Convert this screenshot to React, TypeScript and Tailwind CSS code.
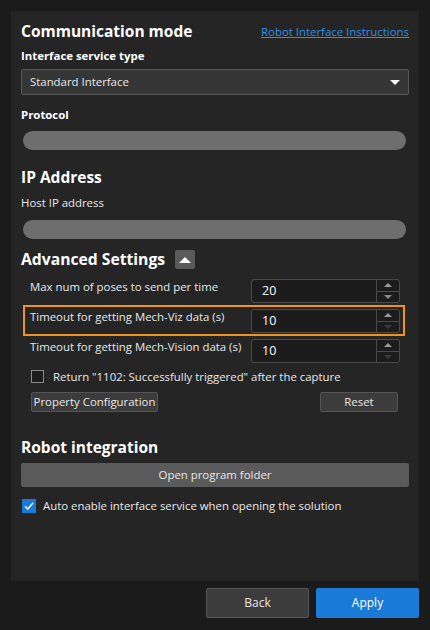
import React from 'react';

const font = { fontFamily: '"Open Sans", "Noto Sans", sans-serif' };

function Spin({ value, downDim }: { value: string; downDim?: boolean }) {
  return (
    <div className="flex h-[24px] w-[149px] rounded-[3px] border border-[#4a4a4a] bg-[#1c1c1c]">
      <div className="flex flex-1 items-center pl-[10px] text-[12.5px] text-white">{value}</div>
      <div className="flex w-[23px] flex-col border-l border-[#4a4a4a]">
        <div className="flex flex-1 items-center justify-center border-b border-[#4a4a4a]">
          <span className="h-0 w-0 border-x-[4px] border-b-[4px] border-x-transparent border-b-[#9a9a9a]" />
        </div>
        <div className="flex flex-1 items-center justify-center">
          <span
            className={
              downDim
                ? 'h-0 w-0 border-x-[4px] border-t-[4px] border-x-transparent border-t-[#3c3c3c]'
                : 'h-0 w-0 border-x-[4px] border-t-[4px] border-x-transparent border-t-[#8a8a8a]'
            }
          />
        </div>
      </div>
    </div>
  );
}

function Row({ label, value, downDim, active }: { label: string; value: string; downDim?: boolean; active?: boolean }) {
  return (
    <div className="relative ml-[12px] flex h-[30px] w-[382px] items-start justify-between pl-[7px] pr-[5px]">
      {active && <div className="absolute -top-px bottom-0 left-0 right-0 border-2 border-[#f0951c]" />}
      <div className="mt-[1px] whitespace-nowrap text-[11.4px] leading-[20px] text-[#e8e8e8]">{label}</div>
      <div className="mt-[3px]">
        <Spin value={value} downDim={downDim} />
      </div>
    </div>
  );
}

export default function App() {
  return (
    <div className="flex h-[630px] w-[430px] flex-col bg-[#1b1b1b]" style={font}>
      <div className="ml-[11px] mt-[11px] flex h-[570px] w-[408px] flex-col bg-[#252525] pl-[10px] pr-[10px]">
        {/* Communication mode */}
        <div className="mt-[11px] flex h-[20px] items-center justify-between">
          <span className="text-[15.5px] font-bold text-white">Communication mode</span>
          <a className="text-[11.4px] text-[#338fe2] underline">Robot Interface Instructions</a>
        </div>
        <div className="mt-[4px] flex h-[20px] items-center text-[11.4px] font-bold text-white">Interface service type</div>
        <div className="mt-[3px] flex h-[26px] items-center justify-between rounded-[2px] border border-[#575757] bg-[#363636] pl-[8px] pr-[8px]">
          <span className="text-[11.4px] text-[#e8e8e8]">Standard Interface</span>
          <span className="h-0 w-0 border-x-[5px] border-t-[5px] border-x-transparent border-t-white" />
        </div>
        <div className="mt-[10px] flex h-[20px] items-center text-[11.4px] font-bold text-white">Protocol</div>
        <div className="ml-[2px] mr-[3px] mt-[6px] h-[19px] rounded-full bg-[#6e6e6e]" />

        {/* IP Address */}
        <div className="mt-[17px] flex h-[21px] items-center text-[15.5px] font-bold text-white">IP Address</div>
        <div className="mt-[5px] flex h-[20px] items-center text-[11.4px] text-[#e8e8e8]">Host IP address</div>
        <div className="ml-[2px] mr-[3px] mt-[7px] h-[19px] rounded-full bg-[#6e6e6e]" />

        {/* Advanced Settings */}
        <div className="mt-[10px] flex h-[21px] items-center gap-[10px]">
          <span className="text-[15.7px] font-bold text-white">Advanced Settings</span>
          <span className="flex h-[19px] w-[20px] items-center justify-center rounded-[2px] bg-[#5a5a5a]">
            <span className="h-0 w-0 border-x-[6px] border-b-[6px] border-x-transparent border-b-white" />
          </span>
        </div>
        <div className="-ml-[10px] mt-[6px] flex flex-col">
          <Row label="Max num of poses to send per time" value="20" />
          <Row label="Timeout for getting Mech-Viz data (s)" value="10" downDim active />
          <Row label="Timeout for getting Mech-Vision data (s)" value="10" downDim />
        </div>
        <div className="ml-[10px] mt-[4px] flex h-[13px] items-center gap-[9px]">
          <span className="h-[13px] w-[13px] border border-[#8a8a8a] bg-[#1c1c1c]" />
          <span className="whitespace-nowrap text-[11.4px] text-[#e8e8e8]">Return "1102: Successfully triggered" after the capture</span>
        </div>
        <div className="ml-[10px] mr-[11px] mt-[9px] flex h-[20px] justify-between">
          <button className="flex h-[20px] w-[127px] items-center justify-center whitespace-nowrap rounded-[2px] border border-[#555] bg-[#3c3c3c] text-[11.4px] text-[#e8e8e8]">
            Property Configuration
          </button>
          <button className="flex h-[20px] w-[78px] items-center justify-center rounded-[2px] border border-[#555] bg-[#3c3c3c] text-[11.4px] text-[#e8e8e8]">
            Reset
          </button>
        </div>

        {/* Robot integration */}
        <div className="mt-[25px] flex h-[21px] items-center text-[15.5px] font-bold text-white">Robot integration</div>
        <button className="mt-[5px] flex h-[24px] items-center justify-center rounded-[2px] bg-[#5a5a5a] text-[11.4px] text-[#e8e8e8]">
          Open program folder
        </button>
        <div className="ml-[1px] mt-[12px] flex h-[14px] items-center gap-[7px]">
          <span className="flex h-[14px] w-[14px] items-center justify-center bg-[#1a7ad8]">
            <svg width="10" height="8" viewBox="0 0 10 8">
              <path d="M1 4.2 L3.8 7 L9 1" fill="none" stroke="white" strokeWidth="1.4" />
            </svg>
          </span>
          <span className="whitespace-nowrap text-[11.4px] text-[#e8e8e8]">Auto enable interface service when opening the solution</span>
        </div>
      </div>

      <div className="mr-[11px] mt-[7px] flex justify-end gap-[7px]">
        <button className="flex h-[30px] w-[103px] items-center justify-center rounded-[2px] border border-[#555] bg-[#3c3c3c] text-[12px] text-[#e8e8e8]">
          Back
        </button>
        <button className="flex h-[30px] w-[103px] items-center justify-center rounded-[2px] bg-[#1a7ad8] text-[12px] text-white">
          Apply
        </button>
      </div>
    </div>
  );
}
